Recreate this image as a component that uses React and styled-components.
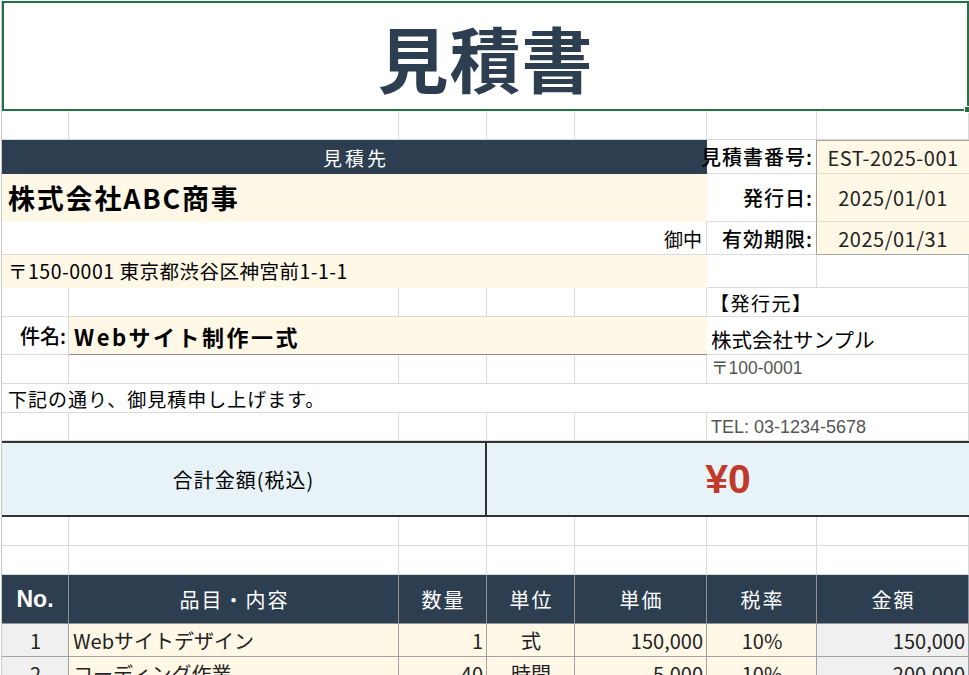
import React from 'react';
import styled, { createGlobalStyle } from 'styled-components';

const NAVY = '#2c3e50';
const CREAM = '#fff8e7';
const BLUE = '#e8f3f8';
const GRID = '#dadada';
const RULE = '#a3a3a3';

const GlobalStyle = createGlobalStyle`
  html, body { margin: 0; padding: 0; background: #fff; overflow: hidden; }
  body { font-family: "Noto Sans CJK JP", "Noto Sans", sans-serif; color: #000; }
`;

const Sheet = styled.div`
  display: grid;
  grid-template-columns: 67px 330px 88px 88px 132px 110px 1fr;
  grid-template-rows: 110px 29px 34px 48px 33px 33px 29px 38px 29px 29px 28px 76px 29px 29px 49px 33px 33px;
  width: 968px;
  margin: 1px 0 0 1px;
  border-left: 1px solid #c8c8c8;
  box-sizing: border-box;
`;

const justify = { left: 'flex-start', center: 'center', right: 'flex-end' };
const valign = { top: 'flex-start', center: 'center', bottom: 'flex-end' };

const Cell = styled.div`
  grid-column: span ${(p) => p.$span || 1};
  box-sizing: border-box;
  min-width: 0;
  display: flex;
  align-items: ${(p) => valign[p.$valign || 'center']};
  justify-content: ${(p) => justify[p.$align || 'left']};
  padding: 0 ${(p) => p.$padR ?? 4}px ${(p) => p.$padB ?? 0}px ${(p) => p.$padL ?? 6}px;
  background: ${(p) => p.$fill || '#fff'};
  border-right: 1px solid ${(p) => (p.$fill ? p.$fill : GRID)};
  border-bottom: 1px solid ${(p) => (p.$fill ? p.$fill : GRID)};
  font-family: ${(p) => (p.$latin ? '"Liberation Sans", Arial, "Noto Sans CJK JP", sans-serif' : 'inherit')};
  font-size: ${(p) => p.$size || 19}px;
  font-weight: ${(p) => p.$weight || 400};
  letter-spacing: ${(p) => p.$track || 0}px;
  color: ${(p) => p.$color || '#000'};
  white-space: nowrap;
  line-height: 1;
`;

const TitleCell = styled.div`
  grid-column: span 7;
  position: relative;
  box-sizing: border-box;
  border: 2px solid #217346;
  display: flex;
  align-items: center;
  justify-content: center;
  font-size: 71px;
  font-weight: 700;
  color: ${NAVY};
  letter-spacing: 1px;
`;

const FillHandle = styled.span`
  position: absolute;
  right: -4px;
  bottom: -4px;
  width: 5px;
  height: 5px;
  background: #217346;
  border: 1px solid #fff;
`;

const Band = styled.div`
  grid-column: span 5;
  background: ${NAVY};
  color: #fff;
  display: flex;
  align-items: center;
  justify-content: center;
  font-size: 19px;
  letter-spacing: 3px;
  padding-left: 3px;
`;

const Label = styled.div`
  box-sizing: border-box;
  display: flex;
  align-items: center;
  justify-content: flex-end;
  padding-right: 3px;
  border-right: 1px solid ${RULE};
  border-bottom: 1px solid ${GRID};
  font-size: 20px;
  font-weight: 500;
  letter-spacing: 1px;
  white-space: nowrap;
`;

const InfoValue = styled.div`
  box-sizing: border-box;
  display: flex;
  align-items: center;
  justify-content: center;
  background: ${CREAM};
  border-top: ${(p) => (p.$first ? `1px solid ${RULE}` : 'none')};
  border-bottom: 1px solid ${(p) => (p.$last ? RULE : '#e2dccb')};
  font-size: 20px;
  color: #222;
  letter-spacing: 0.5px;
`;

const Subject = styled.div`
  grid-column: span 4;
  box-sizing: border-box;
  background: ${CREAM};
  border-bottom: 1px solid #8a8a8a;
  display: flex;
  align-items: center;
  padding-left: 5px;
  font-size: 22px;
  font-weight: 700;
  letter-spacing: 2.5px;
  white-space: nowrap;
`;

const TotalLabel = styled.div`
  grid-column: span 3;
  box-sizing: border-box;
  background: ${BLUE};
  border-top: 2px solid #333;
  border-bottom: 2px solid #333;
  border-right: 2px solid #333;
  display: flex;
  align-items: center;
  justify-content: center;
  font-size: 20px;
  letter-spacing: 1px;
`;

const TotalValue = styled.div`
  grid-column: span 4;
  box-sizing: border-box;
  background: ${BLUE};
  border-top: 2px solid #333;
  border-bottom: 2px solid #333;
  display: flex;
  align-items: center;
  justify-content: center;
  font-family: "Liberation Sans", Arial, sans-serif;
  font-weight: 700;
  font-size: 41px;
  color: #c0392b;
`;

const HeadCell = styled.div`
  box-sizing: border-box;
  background: ${NAVY};
  color: #fff;
  border-right: 1px solid #8e9296;
  border-bottom: 1px solid #8e9296;
  display: flex;
  align-items: center;
  justify-content: center;
  font-size: 20px;
  letter-spacing: 2px;
  padding-left: 2px;
  ${(p) =>
    p.$latin &&
    `font-family: "Liberation Sans", Arial, sans-serif; font-weight: 700; font-size: 23px; letter-spacing: 0; padding-left: 0;`}
`;

const DataCell = styled.div`
  box-sizing: border-box;
  background: ${(p) => p.$fill || CREAM};
  border-right: 1px solid ${RULE};
  border-bottom: 1px solid ${RULE};
  display: flex;
  align-items: center;
  justify-content: ${(p) => justify[p.$align || 'left']};
  padding: 0 3px 0 4px;
  font-size: 20px;
  color: #222;
  white-space: nowrap;
`;

const Empty = ({ n }) =>
  Array.from({ length: n }, (_, i) => <Cell key={i} />);

const items = [
  { no: '1', name: 'Webサイトデザイン', qty: '1', unit: '式', price: '150,000', tax: '10%', amount: '150,000' },
  { no: '2', name: 'コーディング作業', qty: '40', unit: '時間', price: '5,000', tax: '10%', amount: '200,000' },
];

export default function App() {
  return (
    <>
      <GlobalStyle />
      <Sheet>
        <TitleCell>
          見積書
          <FillHandle />
        </TitleCell>

        <Empty n={7} />

        <Band>見積先</Band>
        <Label>見積書番号:</Label>
        <InfoValue $first>EST-2025-001</InfoValue>

        <Cell $span={5} $fill={CREAM} $size={27} $weight={700} $track={1.8} $padL={6}>
          株式会社ABC商事
        </Cell>
        <Label>発行日:</Label>
        <InfoValue>2025/01/01</InfoValue>

        <Cell $span={5} $align="right" $padR={4} $size={19}>
          御中
        </Cell>
        <Label>有効期限:</Label>
        <InfoValue $last>2025/01/31</InfoValue>

        <Cell $span={5} $fill={CREAM} $size={19.5} $track={0.5} $padL={6}>
          〒150-0001 東京都渋谷区神宮前1-1-1
        </Cell>
        <Cell />
        <Cell />

        <Empty n={5} />
        <Cell $span={2} $size={19} $track={1.5} $padL={3}>
          【発行元】
        </Cell>

        <Cell $align="right" $padR={2} $size={20} $weight={500}>
          件名:
        </Cell>
        <Subject>Webサイト制作一式</Subject>
        <Cell $span={2} $size={20.5} $padL={4} $valign="bottom" $padB={5}>
          株式会社サンプル
        </Cell>

        <Empty n={5} />
        <Cell $span={2} $padL={4} $size={17.5} $color="#555" $latin>
          〒100-0001
        </Cell>

        <Cell $span={7} $size={19} $track={1} $padL={6}>
          下記の通り、御見積申し上げます。
        </Cell>

        <Empty n={5} />
        <Cell $span={2} $padL={4} $size={18} $color="#555" $latin>
          TEL: 03-1234-5678
        </Cell>

        <TotalLabel>合計金額(税込)</TotalLabel>
        <TotalValue>¥0</TotalValue>

        <Empty n={7} />
        <Empty n={7} />

        <HeadCell $latin>No.</HeadCell>
        <HeadCell>品目・内容</HeadCell>
        <HeadCell>数量</HeadCell>
        <HeadCell>単位</HeadCell>
        <HeadCell>単価</HeadCell>
        <HeadCell>税率</HeadCell>
        <HeadCell>金額</HeadCell>

        {items.map((it) => (
          <React.Fragment key={it.no}>
            <DataCell $fill="#f0f0f0" $align="center">{it.no}</DataCell>
            <DataCell>{it.name}</DataCell>
            <DataCell $align="right">{it.qty}</DataCell>
            <DataCell $align="center">{it.unit}</DataCell>
            <DataCell $align="right">{it.price}</DataCell>
            <DataCell $align="center">{it.tax}</DataCell>
            <DataCell $fill="#f0f0f0" $align="right">{it.amount}</DataCell>
          </React.Fragment>
        ))}
      </Sheet>
    </>
  );
}
